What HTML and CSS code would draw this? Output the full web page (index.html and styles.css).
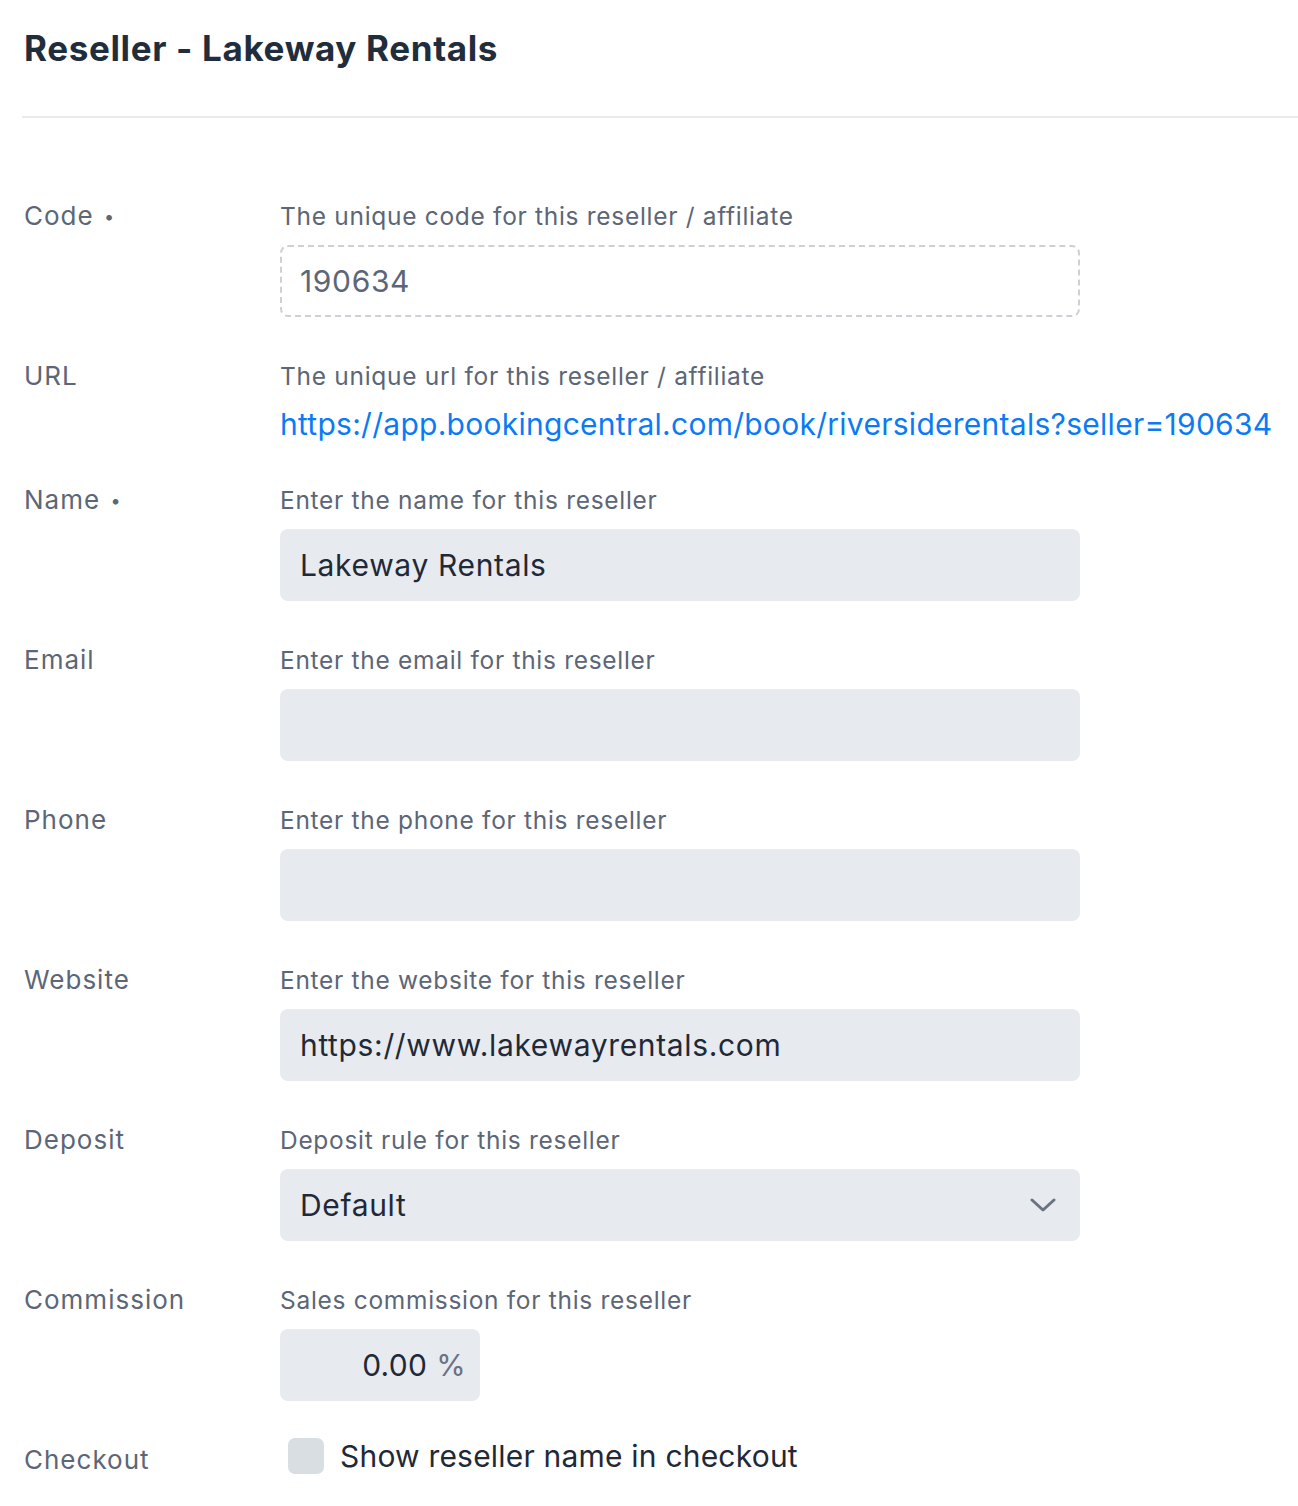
FILE: index.html
```html
<!DOCTYPE html>
<html lang="en">
<head>
<meta charset="utf-8">
<title>Reseller - Lakeway Rentals</title>
<link rel="stylesheet" href="styles.css">
</head>
<body>
<div class="page">
  <header class="header">
    <h1 class="title">Reseller - Lakeway Rentals</h1>
  </header>
  <form class="form">
    <div class="row">
      <div class="label">Code <span class="req">•</span></div>
      <div class="field">
        <div class="help">The unique code for this reseller / affiliate</div>
        <div class="input input-readonly">190634</div>
      </div>
    </div>
    <div class="row">
      <div class="label">URL</div>
      <div class="field">
        <div class="help">The unique url for this reseller / affiliate</div>
        <a class="link" href="#">https://app.bookingcentral.com/book/riversiderentals?seller=190634</a>
      </div>
    </div>
    <div class="row">
      <div class="label">Name <span class="req">•</span></div>
      <div class="field">
        <div class="help">Enter the name for this reseller</div>
        <div class="input">Lakeway Rentals</div>
      </div>
    </div>
    <div class="row">
      <div class="label">Email</div>
      <div class="field">
        <div class="help">Enter the email for this reseller</div>
        <div class="input"></div>
      </div>
    </div>
    <div class="row">
      <div class="label">Phone</div>
      <div class="field">
        <div class="help">Enter the phone for this reseller</div>
        <div class="input"></div>
      </div>
    </div>
    <div class="row">
      <div class="label">Website</div>
      <div class="field">
        <div class="help">Enter the website for this reseller</div>
        <div class="input">https://www.lakewayrentals.com</div>
      </div>
    </div>
    <div class="row">
      <div class="label">Deposit</div>
      <div class="field">
        <div class="help">Deposit rule for this reseller</div>
        <div class="input select">
          <span>Default</span>
          <svg class="chevron" width="26" height="16" viewBox="0 0 26 16"><path d="M2 3 L13 13 L24 3" fill="none" stroke="#6b7280" stroke-width="3" stroke-linecap="round" stroke-linejoin="round"/></svg>
        </div>
      </div>
    </div>
    <div class="row">
      <div class="label">Commission</div>
      <div class="field">
        <div class="help">Sales commission for this reseller</div>
        <div class="input percent"><span>0.00</span><span class="unit">%</span></div>
      </div>
    </div>
    <div class="row row-check">
      <div class="label">Checkout</div>
      <div class="field">
        <label class="check"><span class="box"></span><span class="check-text">Show reseller name in checkout</span></label>
      </div>
    </div>
  </form>
</div>
</body>
</html>
```
FILE: styles.css
```css
html, body {
  margin: 0;
  padding: 0;
  background: #ffffff;
}
body {
  font-family: Inter, "Noto Sans", "Liberation Sans", sans-serif;
  color: #1f2937;
}
.page {
  padding-left: 22px;
}
.header {
  border-bottom: 2px solid #e8eaed;
  height: 118px;
  box-sizing: border-box;
  padding-top: 26px;
  padding-left: 2px;
}
.title {
  margin: 0;
  font-size: 35px;
  line-height: 44px;
  font-weight: 700;
  color: #1f2d3d;
  letter-spacing: 0.65px;
}
.form {
  padding-top: 82px;
  padding-left: 2px;
}
.row {
  display: flex;
  padding-bottom: 43px;
}
.label {
  width: 256px;
  flex: none;
  font-size: 26px;
  line-height: 32px;
  color: #5c6676;
  letter-spacing: 1px;
}
.req {
  font-size: 18px;
  vertical-align: 2px;
  margin-left: 2px;
}
.field {
  display: flex;
  flex-direction: column;
}
.help {
  font-size: 24.5px;
  line-height: 32px;
  color: #5c6676;
  margin-bottom: 13px;
  letter-spacing: 0.7px;
}
.input {
  width: 800px;
  height: 72px;
  box-sizing: border-box;
  background: #e7eaef;
  border-radius: 8px;
  padding: 0 20px;
  display: flex;
  align-items: center;
  font-size: 30px;
  color: #1f2937;
  letter-spacing: 0.65px;
}
.input-readonly {
  background: #ffffff;
  border: 2px dashed #cdd1d6;
  padding-left: 18px;
  color: #5c6676;
}
.link {
  margin-top: 3px;
  margin-bottom: 1px;
  font-size: 30px;
  line-height: 32px;
  color: #0a7bf5;
  text-decoration: none;
  letter-spacing: 0.27px;
}
.select {
  justify-content: space-between;
  padding-right: 24px;
}
.percent {
  width: 200px;
  justify-content: flex-end;
  padding-right: 14px;
  letter-spacing: 0.3px;
}
.unit {
  color: #6b7280;
  margin-left: 9px;
}
.row-check .label {
  padding-top: 0;
}
.check {
  display: flex;
  align-items: center;
  margin-top: -8px;
  padding-left: 8px;
}
.box {
  width: 36px;
  height: 36px;
  border-radius: 7px;
  background: #d9dee3;
  flex: none;
}
.check-text {
  margin-left: 16px;
  font-size: 30px;
  line-height: 40px;
  color: #1f2937;
  letter-spacing: 0.2px;
}
```
